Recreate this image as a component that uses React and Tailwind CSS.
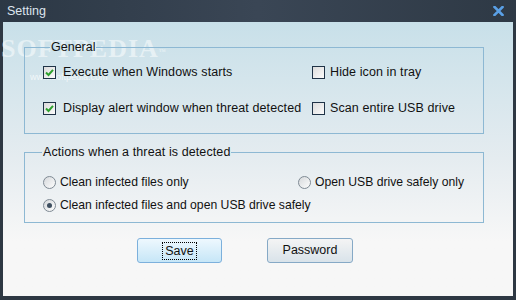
import React from "react";

function Check({ checked }) {
  return (
    <span className="relative w-[13px] h-[13px] shrink-0 border border-[#1f3347] bg-linear-to-br from-[#dcdcdc] to-[#fbfbfb] flex items-center justify-center">
      {checked && (
        <svg width="9" height="9" viewBox="0 0 9 9">
          <path d="M1 4.5 L3.5 7 L8 1.8" stroke="#2ea12e" strokeWidth="2" fill="none" />
        </svg>
      )}
    </span>
  );
}

function Radio({ checked }) {
  return (
    <span className="w-[13px] h-[13px] shrink-0 rounded-full border border-[#7f8a94] bg-linear-to-br from-[#d6d9dc] to-[#fdfdfd] flex items-center justify-center">
      {checked && <span className="w-[5px] h-[5px] rounded-full bg-[#3e4f60]" />}
    </span>
  );
}

export default function App() {
  return (
    <div className="w-[516px] h-[300px] bg-[#2e3843] flex flex-col font-['Liberation_Sans',sans-serif] text-[12.5px] text-[#111]">
      <div className="h-[22px] shrink-0 flex items-center justify-between pl-[7px] pr-[12px] bg-linear-to-r from-[#2c3845] via-[#3a4655] to-[#2e3945]">
        <span className="text-[#dde5ee] text-[12.5px] leading-none">Setting</span>
        <svg width="11" height="10" viewBox="0 0 11 10">
          <path d="M1.5 1 L9.5 9 M9.5 1 L1.5 9" stroke="#5aa0e6" strokeWidth="2.6" strokeLinecap="square" />
        </svg>
      </div>
      <div className="relative mx-[3px] mb-[4px] flex-1 flex flex-col bg-linear-to-b from-[#c8e0e9] from-0% via-[#e5ecf0] via-50% to-[#f7f7f7] to-80%">
        <div className="absolute left-[-2px] top-[14px] text-[26px] leading-none font-['Liberation_Serif',serif] font-bold tracking-[1px] text-white/50 select-none pointer-events-none">
          SOFTPEDIA<sup className="text-[7px]">™</sup>
        </div>
        <div className="absolute left-[27px] top-[51px] text-[9px] leading-none text-white/70 pointer-events-none">www.softpedia.com</div>

        <fieldset className="relative ml-[21px] mt-[18px] w-[460px] h-[94px] border border-[#8db8d3]">
          <legend className="ml-[25px] px-[1px] leading-[14px]">General</legend>
          <div className="grid grid-cols-[269px_auto] gap-y-[16px] pl-[18px] pt-[8px] tracking-[0.1px]">
            <div className="h-[20px] flex items-center gap-[7px]"><Check checked /><span>Execute when Windows starts</span></div>
            <div className="h-[20px] flex items-center gap-[5px]"><Check /><span>Hide icon in tray</span></div>
            <div className="h-[20px] flex items-center gap-[7px]"><Check checked /><span>Display alert window when threat detected</span></div>
            <div className="h-[20px] flex items-center gap-[5px]"><Check /><span>Scan entire USB drive</span></div>
          </div>
        </fieldset>

        <fieldset className="ml-[21px] mt-[11px] w-[460px] h-[78px] border border-[#8db8d3]">
          <legend className="ml-[17px] px-[1px] leading-[14px] tracking-[0.1px]">Actions when a threat is detected</legend>
          <div className="grid grid-cols-[255px_auto] gap-y-[3px] pl-[18px] pt-[13px] text-[12.2px]">
            <div className="h-[20px] flex items-center gap-[4px]"><Radio /><span>Clean infected files only</span></div>
            <div className="h-[20px] flex items-center gap-[4px]"><Radio /><span>Open USB drive safely only</span></div>
            <div className="h-[20px] flex items-center gap-[4px] col-span-2"><Radio checked /><span>Clean infected files and open USB drive safely</span></div>
          </div>
        </fieldset>

        <div className="flex ml-[134px] mt-[15px] gap-[45px]">
          <button className="w-[85px] h-[25px] rounded-[3px] border border-[#7cb0dc] bg-linear-to-b from-[#eef8fe] to-[#c6e6f7] flex items-center justify-center">
            <span className="border border-dotted border-black px-[2px] leading-[16px]">Save</span>
          </button>
          <button className="w-[86px] h-[25px] rounded-[3px] border border-[#86a9c6] bg-linear-to-b from-[#f4f4f4] to-[#d9e3ea] flex items-center justify-center">
            <span>Password</span>
          </button>
        </div>
      </div>
    </div>
  );
}
